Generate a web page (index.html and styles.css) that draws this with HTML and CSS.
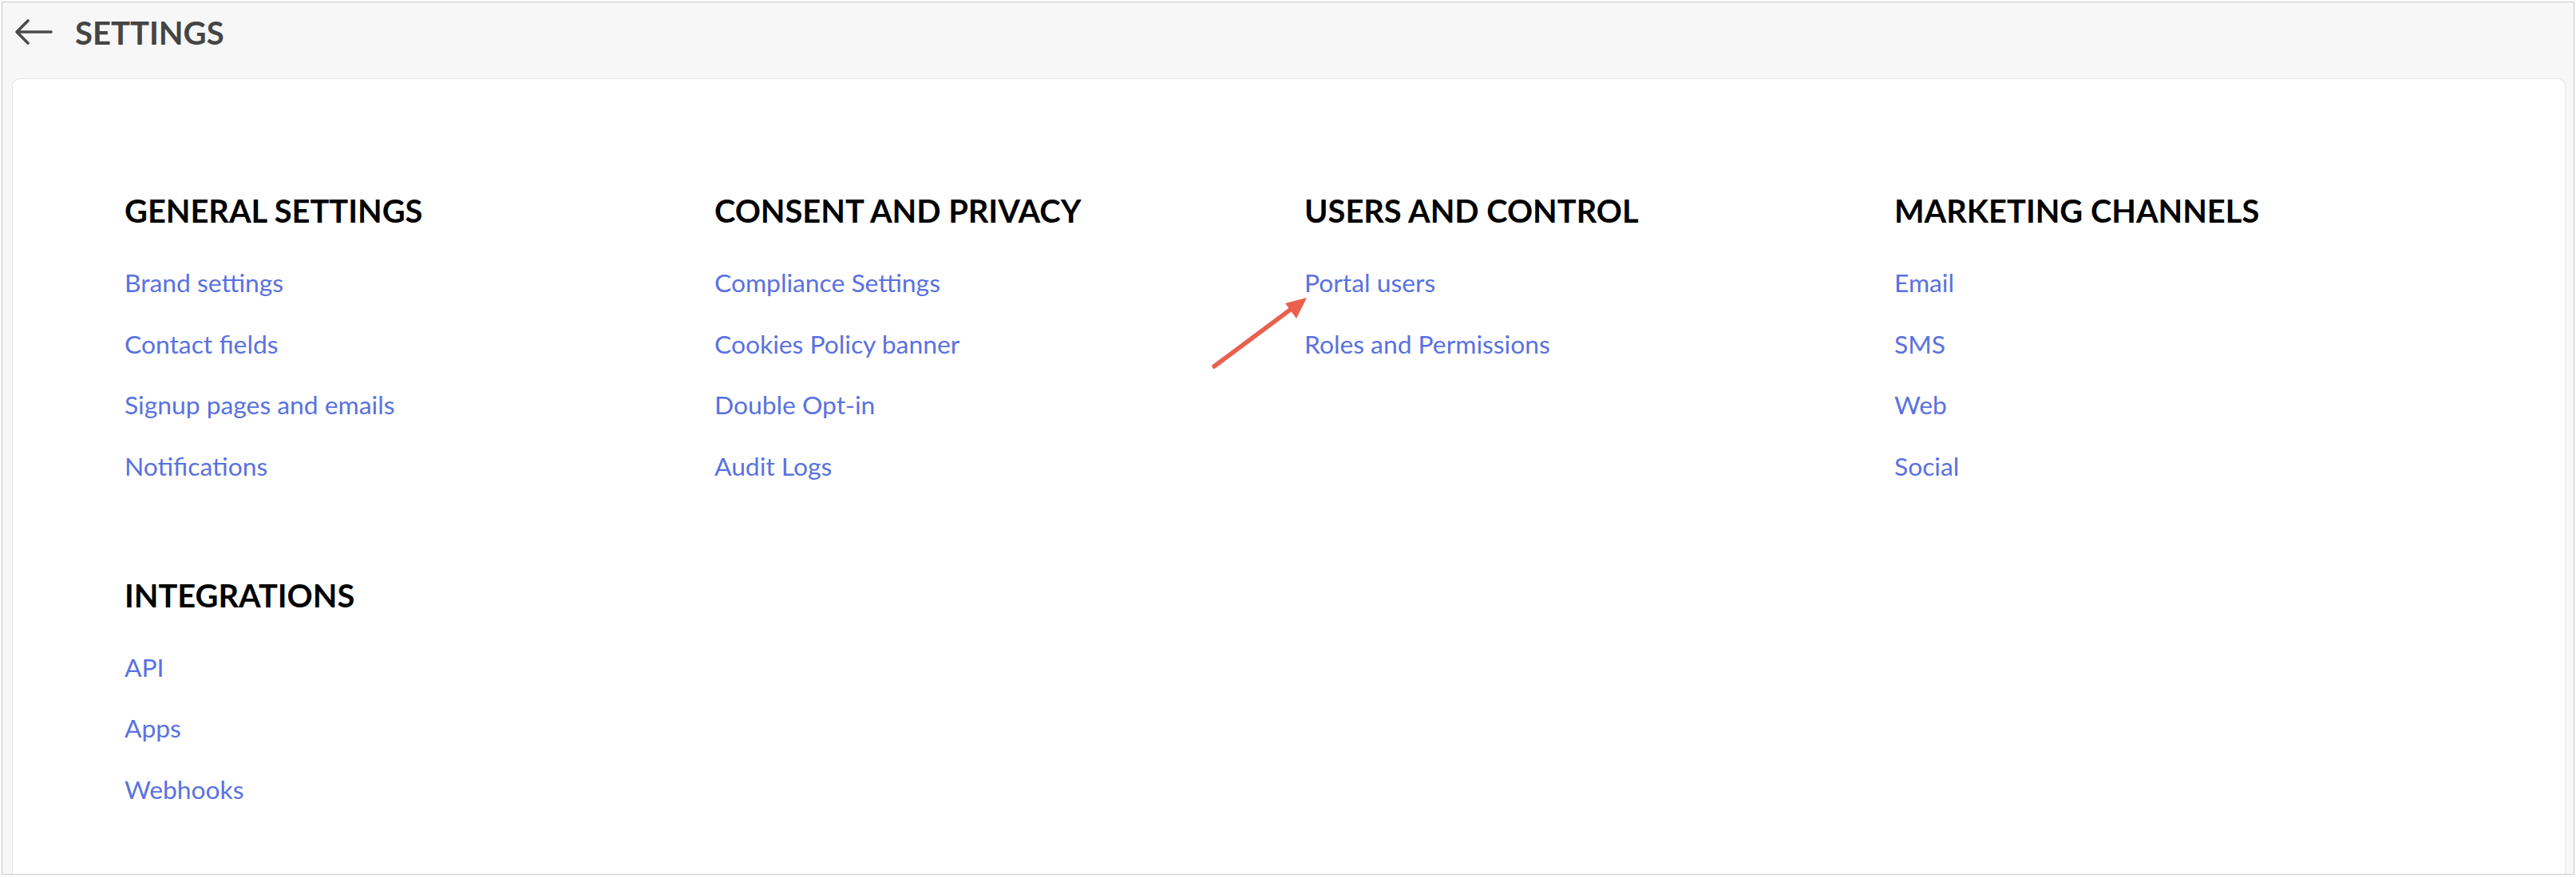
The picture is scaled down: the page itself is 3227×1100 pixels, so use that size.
FILE: index.html
```html
<!DOCTYPE html>
<html lang="en">
<head>
  <meta charset="UTF-8">
  <title>Settings</title>
  <link rel="stylesheet" href="styles.css">
</head>
<body>

  <div class="frame">
    <!-- top bar -->
    <div class="topbar">
      <svg class="back" width="50" height="36" viewBox="0 0 50 36">
        <path d="M47 18H4M18 4L4 18l14 14" fill="none" stroke="#4a4a4a" stroke-width="3.6" stroke-linecap="round" stroke-linejoin="round"/>
      </svg>
      <span class="title">SETTINGS</span>
    </div>

    <!-- settings groups -->
    <div class="card">
      <div class="grid">
        <div class="group">
          <h2>GENERAL SETTINGS</h2>
          <a href="#">Brand settings</a>
          <a href="#">Contact fields</a>
          <a href="#">Signup pages and emails</a>
          <a href="#">Notifications</a>
        </div>
        <div class="group">
          <h2>CONSENT AND PRIVACY</h2>
          <a href="#">Compliance Settings</a>
          <a href="#">Cookies Policy banner</a>
          <a href="#">Double Opt-in</a>
          <a href="#">Audit Logs</a>
        </div>
        <div class="group">
          <h2>USERS AND CONTROL</h2>
          <a href="#">Portal users</a>
          <a href="#">Roles and Permissions</a>
        </div>
        <div class="group">
          <h2>MARKETING CHANNELS</h2>
          <a href="#">Email</a>
          <a href="#">SMS</a>
          <a href="#">Web</a>
          <a href="#">Social</a>
        </div>
        <div class="group">
          <h2>INTEGRATIONS</h2>
          <a href="#">API</a>
          <a href="#">Apps</a>
          <a href="#">Webhooks</a>
        </div>
      </div>

      <!-- pointer to portal users -->
      <svg class="pointer" width="130" height="100" viewBox="0 0 130 100">
        <path d="M6 92L104 19" fill="none" stroke="#ea604d" stroke-width="5.5" stroke-linecap="round"/>
        <path d="M122 6L95 13l14 19z" fill="#ea604d"/>
      </svg>
    </div>
  </div>

</body>
</html>
```

FILE: styles.css
```css
body {
  margin: 2px;
  font-family: Lato, "Open Sans", Arial, sans-serif;
  background: #fff;
}
.frame {
  height: 1094px;
  box-sizing: border-box;
  border: 1px solid #c6cacf;
  background: #f7f7f7;
  padding: 0 10px 0 12px;
  display: flex;
  flex-direction: column;
}
.topbar {
  height: 95px;
  display: flex;
  align-items: flex-start;
  padding-top: 17px;
  box-sizing: border-box;
}
.back {
  margin: 2px 0 0 2px;
}
.title {
  margin-left: 27px;
  font-size: 40px;
  font-weight: 700;
  color: #454545;
  line-height: 42px;
}
.card {
  flex: 1;
  position: relative;
  background: #fff;
  border: 1px solid #e4e4e4;
  border-bottom: none;
  border-radius: 10px 10px 0 0;
  padding: 142px 0 0 140px;
}
.grid {
  display: grid;
  grid-template-columns: repeat(4, 739px);
  row-gap: 116px;
}
.group {
  display: flex;
  flex-direction: column;
  align-items: flex-start;
}
h2 {
  margin: 0 0 44px;
  font-size: 39.8px;
  line-height: 46px;
  font-weight: 700;
  color: #000;
}
.group a {
  font-size: 31.8px;
  line-height: 46px;
  color: #5a72e1;
  text-decoration: none;
  margin-bottom: 30.5px;
}
.group a:last-child {
  margin-bottom: 0;
}
.pointer {
  position: absolute;
  left: 1499px;
  top: 268px;
}
```
